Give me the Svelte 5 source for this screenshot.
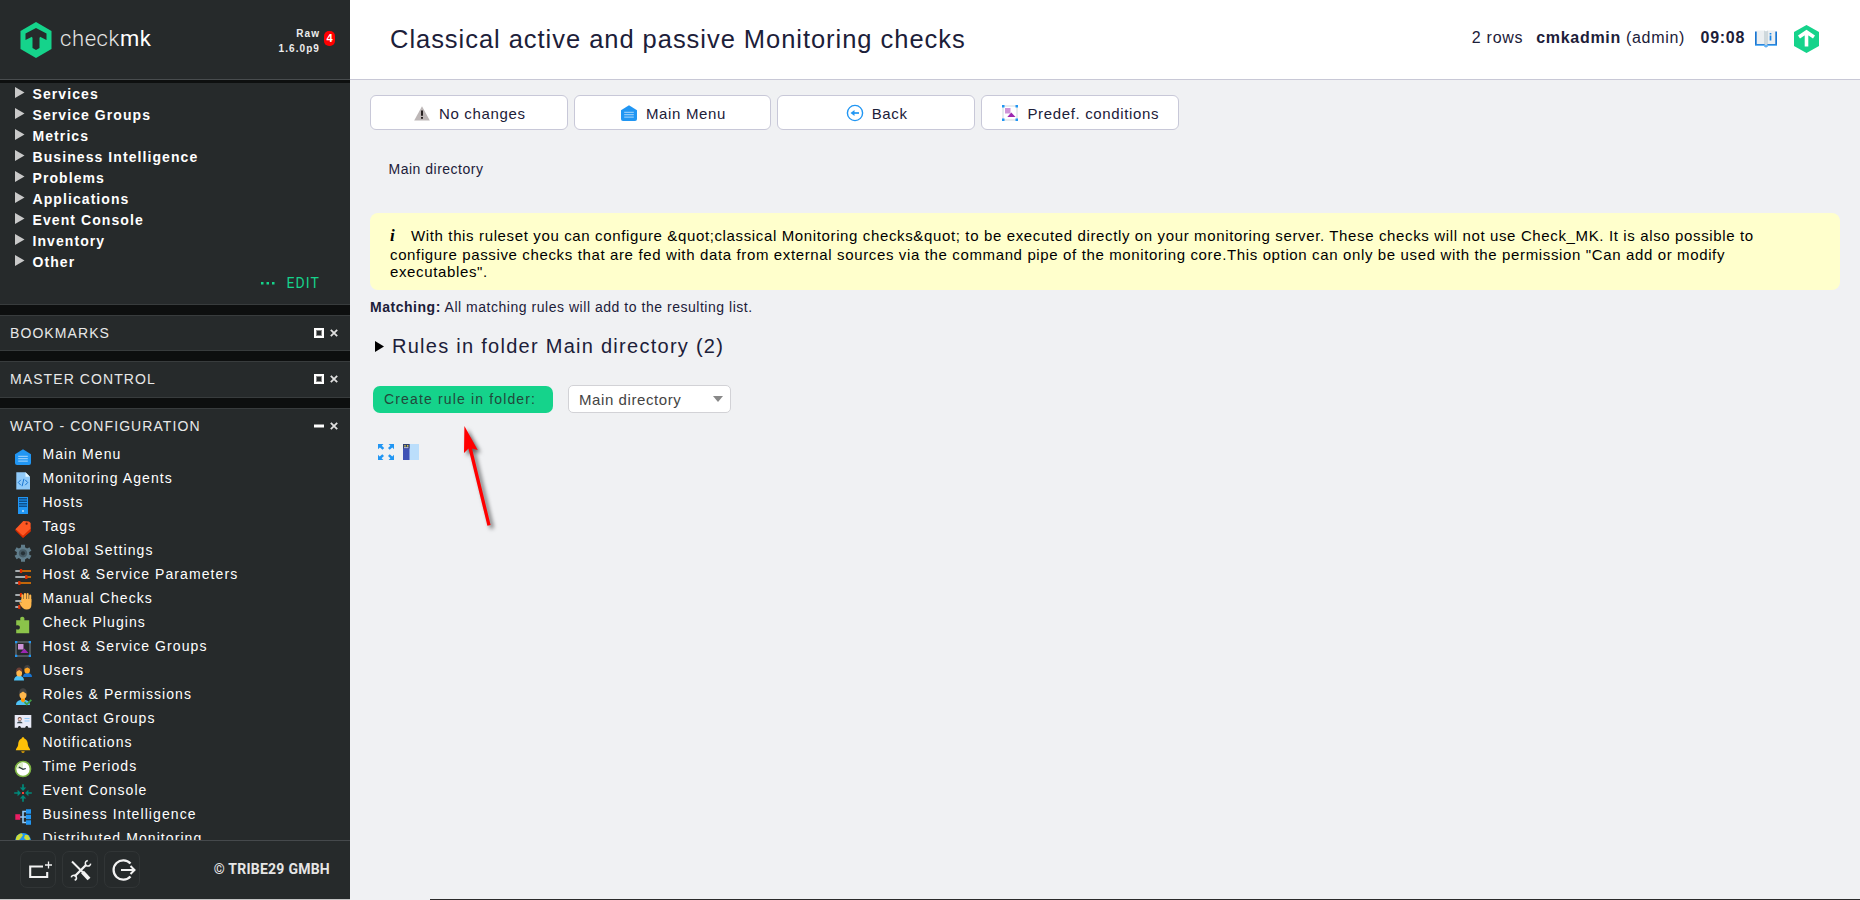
<script>
  const views = ['Services', 'Service Groups', 'Metrics', 'Business Intelligence', 'Problems', 'Applications', 'Event Console', 'Inventory', 'Other'];

  const art = {
    home: '<path d="M0 5.3 8 .2l8 5.1V14a2 2 0 0 1-2 2H2a2 2 0 0 1-2-2z" fill="#2196f3"/><path d="M3.2 7.3h9.6M3.2 9.7h9.6M3.2 12.1h9.6" stroke="#90caf9" stroke-width="1.2"/>',
    agent: '<path d="M1.3-.8h9.2L15 3.700V16.500H1.300z" fill="#90caf9"/><path d="M10.500-.8 15 3.700h-4.500z" fill="#e1f5fe"/><path d="M5.800 6.800 3.300 9.500l2.500 2.700M10.200 6.800l2.500 2.700-2.500 2.700M8.900 5.800 7.100 13.200" stroke="#1976d2" stroke-width="1" fill="none"/>',
    host: '<path d="M3 0h10v17H3z" fill="#2196f3"/><path d="M4 1h8v1.500H4zM4 3.500h8V5H4zM4 6h8v1.500H4zM4 8.500h8V10H4z" fill="#0d4f8b"/><circle cx="8" cy="14" r="1" fill="#bbdefb"/>',
    tag: '<path d="m.6 9 7.500 7.800 7.500-6.300V6L8 13.500z" fill="#bf360c"/><path d="M8.300 0 14 .4 15.600 2v5.700L8 15 .4 8.300z" fill="#ff5722"/><path d="M.4 8.300 8 15l7.600-7.300v2.600L8 17 .4 9.400z" fill="#dd2c00"/><circle cx="11.600" cy="2.700" r="1.100" fill="#702010"/>',
    gear: '<circle cx="8" cy="8.300" r="6.300" fill="#607d8b"/><path d="M8-.2v17M.6 4.050l14.800 8.500M.6 12.550l14.800-8.500" stroke="#607d8b" stroke-width="4"/><circle cx="8" cy="8.300" r="4.100" fill="#455a64"/><circle cx="8" cy="8.300" r="2.100" fill="#263238"/>',
    sliders: '<path d="M.3 2h6M.3 8h11M.3 14h4" stroke="#cfd8dc" stroke-width="1.700"/><path d="M6 2h10M12 8h4M4 14h12" stroke="#f57c00" stroke-width="1.700"/><path d="M6 .1v3.800M11.300 6.100v3.800M4.300 12.100v3.800" stroke="#dd2c00" stroke-width="2.300"/>',
    hand: '<path d="M.3 2h6M.3 8h8M.3 14h4" stroke="#cfd8dc" stroke-width="1.700"/><path d="M6 .1v3.800M4.300 12.100v3.800" stroke="#dd2c00" stroke-width="2.200"/><path d="M7.500 9V2.200M10 8V1M12.600 8V1M15.200 9V2.600" stroke="#ffb74d" stroke-width="2.100" stroke-linecap="round"/><path d="M6.400 6h10v6c0 3-2 4.500-4.700 4.500-3 0-4.500-2-6-4L4.200 9.600c.7-1 1.600-.7 2.200.3z" fill="#ffb74d"/>',
    puzzle: '<path d="M1.200 3.200h4.200C4.700.7 5.700-.3 7.300-.3S10 .9 9.300 3.200h4.900v13H1.200v-4c2.500.7 3.700-.2 3.700-1.800s-1.300-2.500-3.700-1.900z" fill="#8bc34a"/>',
    group: '<path d="M1 1h14v14H1z" fill="none" stroke="#78838b" stroke-width="1"/><path d="M3 3h5.500v5.500H3z" fill="#ce93d8"/><path d="m5.300 12 4-4.500 4.200 4.500z" fill="#9c27b0"/><path d="M0 0h2.300v2.300H0zM13.700 0H16v2.300h-2.300zM0 13.700h2.300V16H0zM13.700 13.700H16V16h-2.300z" fill="#2196f3"/>',
    predef: '<path d="M1 1h14v14H1z" fill="none" stroke="#cfd8dc" stroke-width="1"/><path d="M3 3h5.500v5.500H3z" fill="#ce93d8"/><path d="m5.300 12 4-4.500 4.200 4.500z" fill="#9c27b0"/><path d="M0 0h2.500v2.500H0zM13.500 0H16v2.500h-2.500zM0 13.500h2.500V16H0zM13.500 13.500H16V16h-2.500z" fill="#2196f3"/>',
    users: '<path d="M8 12c0-3 2-4 4.500-4s4.500 1 4.500 4z" fill="#1976d2"/><path d="M-1 15.500c0-3 2-4.700 5-4.700s5 1.700 5 4.700z" fill="#4fc3f7"/><ellipse cx="12.200" cy="5" rx="2.800" ry="3.600" fill="#ffa726"/><path d="M9.200 4c-.3-3 1.300-4 3-4s3.400 1 3 4L12.300 2.500z" fill="#424242"/><ellipse cx="4.200" cy="8" rx="2.900" ry="3.600" fill="#ffb74d"/><path d="M1 7c-.3-3 1.300-4.500 3.200-4.500S7.700 4 7.400 7L4.200 5z" fill="#6d4037"/>',
    roles: '<path d="M1 16c0-3.800 3-5.300 7-5.300S14.800 12.200 15 16z" fill="#4fc3f7"/><path d="M6 8h4v4l-2 1.500L6 12z" fill="#ff9800"/><ellipse cx="8" cy="5.800" rx="3.500" ry="4" fill="#ffb74d"/><path d="M4.300 5C4 1.500 5.300-.8 8-.8S12 1.500 11.700 5L8 2.500z" fill="#424242"/><path d="m9.500 13 2.300 2.300 4.500-4.500" fill="none" stroke="#43a047" stroke-width="1.800"/>',
    card: '<path d="M-.3 2h16.600v12.800h-3c-.3-2.500-2.800-2.500-3.100 0H6c-.3-2.500-2.800-2.500-3.100 0H-.3z" fill="#e8eaf6"/><circle cx="4.700" cy="6" r="2" fill="#6d4c41"/><circle cx="4.700" cy="6.300" r="1.200" fill="#ffccbc"/><path d="M2 10.300c0-2.500 5.500-2.500 5.500 0z" fill="#37474f"/><path d="M9.500 5.500h5M9.500 8h5" stroke="#90caf9" stroke-width="1"/>',
    bell: '<path d="M8 .3c1 0 1.300.7 1.300 1.300C12 2.500 12.700 5 12.900 8c.2 2.500 2.300 3.200 2.300 5.300H.8C.8 11.200 2.900 10.500 3.100 8c.2-3 .9-5.500 3.600-6.400C6.700 1 7 .3 8 .3z" fill="#ffc107"/><path d="M6.300 14.200h3.400c0 2.300-3.400 2.300-3.400 0z" fill="#e6a400"/>',
    clock: '<circle cx="8" cy="8" r="7.500" fill="#fff" stroke="#7cb342" stroke-width="1.700"/><path d="M8 8V1.500A6.500 6.500 0 0 0 1.500 8z" fill="#dcedc8"/><path d="m3.800 6 4.200 2.400 2.800-.9" fill="none" stroke="#263238" stroke-width="1.300"/>',
    event: '<path d="M8-.8v5M8 16.800v-5M-.8 8h5M16.800 8h-5" stroke="#00897b" stroke-width="1.700"/><path d="M4.800 2.600h6.400L8 6zM4.800 13.400h6.400L8 10zM2.600 4.800v6.400L6 8zM13.400 4.800v6.400L10 8z" fill="#00897b"/><path d="M7 7h2v2H7z" fill="#f44336"/>',
    tree: '<path d="M5 8h3M12 2.500H8v11h4M8 8h4" fill="none" stroke="#90caf9" stroke-width="1.600"/><path d="M.3 5.200h4.900v5.600H.3z" fill="#e91e63"/><path d="M11 .2h5v4.600h-5zM11 5.700h5v4.600h-5zM11 11.200h5v4.600h-5z" fill="#2196f3"/>',
    globe: '<circle cx="8" cy="8" r="8" fill="#2196f3"/><path d="M1 5c1-3 3-4.500 5.500-4.800L8 2 6 5l-2 2-3 1zM10 2l3 0 2.300 4L12 8 9 5z" fill="#cddc39"/>',
    warn: '<path d="M8 1.200 15.800 15.400H.2z" fill="#bdb7b7"/><path d="M8 5.500v5.300M8 12v1.800" stroke="#272222" stroke-width="2"/>',
    back: '<circle cx="8" cy="8" r="7.600" fill="none" stroke="#2196f3" stroke-width="1.400"/><path d="M7 8h5" stroke="#2196f3" stroke-width="1.700"/><path d="m3.500 8 4-3v6z" fill="#2196f3"/>',
    expand: '<path d="M0 0h5.500L3.800 1.700 6.200 4.100 4.500 5.800 1.900 3.400 0 5.300zM16 0v5.300l-1.700-1.900-2.600 2.400L10 4.100l2.400-2.400L10.600 0zM0 16v-5.300l1.700 1.900 2.600-2.400L6 11.900l-2.400 2.400L5.400 16zM16 16h-5.400l1.800-1.700-2.400-2.400 1.700-1.700 2.600 2.400 1.700-1.900z" fill="#2196f3"/>',
    panel: '<path d="M0 0h16v16H0z" fill="#bbdefb"/><path d="M0 0h6.500v16H0z" fill="#3f51b5"/><path d="M0 0h6.500v4.500H0z" fill="#303f70"/><path d="M1.300 1.800h1.400M4 1.800h1.400" stroke="#ffeb3b" stroke-width="1.200"/><path d="M1 3.700h4.500" stroke="#c5cae9" stroke-width="1"/>'
  };
  const icon = (name) => `<svg width="16" height="16" viewBox="0 0 16 16" style="display:block;overflow:visible">${art[name]}</svg>`;

  const wato = [
    ['home', 'Main Menu'], ['agent', 'Monitoring Agents'], ['host', 'Hosts'], ['tag', 'Tags'],
    ['gear', 'Global Settings'], ['sliders', 'Host & Service Parameters'], ['hand', 'Manual Checks'],
    ['puzzle', 'Check Plugins'], ['group', 'Host & Service Groups'], ['users', 'Users'],
    ['roles', 'Roles & Permissions'], ['card', 'Contact Groups'], ['bell', 'Notifications'],
    ['clock', 'Time Periods'], ['event', 'Event Console'], ['tree', 'Business Intelligence'],
    ['globe', 'Distributed Monitoring']
  ];
  const buttons = [['warn', 'No changes'], ['home', 'Main Menu'], ['back', 'Back'], ['predef', 'Predef. conditions']];

  const help = [
    'With this ruleset you can configure &quot;classical Monitoring checks&quot; to be executed directly on your monitoring server. These checks will not use Check_MK. It is also possible to',
    'configure passive checks that are fed with data from external sources via the command pipe of the monitoring core.This option can only be used with the permission "Can add or modify',
    'executables".'
  ];
</script>

{#snippet snapHead(title, open)}
  <div class="snap-head">
    <span class="snap-title">{title}</span>
    <svg width="10" height="10" viewBox="0 0 10 10">
      {#if open}
        <path d="M0 5h10" stroke="#fff" stroke-width="3" />
      {:else}
        <path d="M0 0h10v10H0z" fill="#fff" /><path d="M2 2h6v6H2z" fill="#888" /><path d="M3 3h4v4H3z" fill="#262a2b" />
      {/if}
    </svg>
    <svg class="close" width="8" height="8" viewBox="0 0 8 8"><path d="m.8.8 6.400 6.400M7.200.8.8 7.200" stroke="#e0e0e0" stroke-width="1.800" /></svg>
  </div>
{/snippet}

<div class="page">
  <aside>
    <div class="brand">
      <svg width="32" height="36" viewBox="0 0 32 36">
        <path d="M16 0 31.500 9v18L16 36 .5 27V9z" fill="#15d38b" />
        <path d="M5.500 18v-6.500L16 6l10.500 5.500V18l-7-3.400V26L16 28l-3.500-2V14.600z" fill="#262a2b" />
        <path d="M16 11.500 12.500 13.500v2M16 11.500l3.500 2v2" stroke="#262a2b" fill="none" />
      </svg>
      <span class="word">check<b>mk</b></span>
      <span class="version">Raw<br />1.6.0p9</span>
      <span class="badge">4</span>
    </div>
    <div class="snapins">
      <section class="views">
        {#each views as v}
          <div class="view"><svg width="10" height="11" viewBox="0 0 10 11"><path d="M0 0v11l9.500-5.500z" fill="#c9c9c9" /></svg>{v}</div>
        {/each}
        <div class="edit"><svg width="14" height="3" viewBox="0 0 14 3"><path d="M0 0h2.500v2.500H0zM5.500 0H8v2.500H5.500zM11 0h2.500v2.500H11z" fill="#15d38b" /></svg>EDIT</div>
      </section>
      <section class="closed">{@render snapHead('BOOKMARKS', false)}</section>
      <section class="closed tall">{@render snapHead('MASTER CONTROL', false)}</section>
      <section class="wato">
        {@render snapHead('WATO - CONFIGURATION', true)}
        {#each wato as [name, label]}
          <div class="item"><span class="ico">{@html icon(name)}</span>{label}</div>
        {/each}
      </section>
    </div>
    <footer>
      <span class="tool"><svg width="26" height="24" viewBox="0 0 26 24"><path d="M17 8.500H4.200V19h17v-5" fill="none" stroke="#f2f2f2" stroke-width="2.100" /><path d="M22.500 3.500v7M19 7h7" stroke="#f2f2f2" stroke-width="1.300" /></svg></span>
      <span class="tool"><svg width="26" height="24" viewBox="0 0 26 24"><path d="M4 3.500 15.500 15" stroke="#f2f2f2" stroke-width="2" /><path d="m14.500 14 6.500 7" stroke="#f2f2f2" stroke-width="4" /><path d="M18 7 6.500 18.500" stroke="#f2f2f2" stroke-width="2.300" /><path d="M19.800 2.500c-2 .6-2.900 2-2.300 4L19 8c2 .4 3.300-.4 3.700-2.400M6.700 22.300c1.700-.8 2.200-2 1.500-3.600L6.800 17.300c-2-.2-3.200.5-3.500 2" fill="none" stroke="#f2f2f2" stroke-width="1.500" /></svg></span>
      <span class="tool"><svg width="26" height="24" viewBox="0 0 26 24"><path d="M20.500 5.500a9.700 9.700 0 1 0 0 13" fill="none" stroke="#f2f2f2" stroke-width="2.300" /><path d="M11 12h13M20.500 8l4 4-4 4" fill="none" stroke="#f2f2f2" stroke-width="2" /></svg></span>
      <span class="copy">© TRIBE29 GMBH</span>
    </footer>
  </aside>

  <main>
    <header>
      <h1>Classical active and passive Monitoring checks</h1>
      <div class="status">
        <span class="rows">2 rows</span>
        <b class="user">cmkadmin</b>
        <span class="role">(admin)</span>
        <b class="time">09:08</b>
        <svg class="book" width="22" height="18" viewBox="0 0 22 18">
          <path d="M0 1.500h22v14.500h-9l-2 1.500-2-1.500H0z" fill="#1976d2" />
          <path d="M0 14.800h22V16h-9l-2 1.500L9 16H0z" fill="#64b5f6" />
          <path d="M1.700.5h7.800L11 1.300l1.500-.8h7.800V14h-7.800L11 15l-1.500-1H1.700z" fill="#eceff1" />
          <path d="M9 .5 11 1.500V15L9 14zM13 .5l-2 1v13.500l2-1z" fill="#cfd8dc" />
          <path d="M15.500 3v1.500M15.500 5.500V10.500" stroke="#1e88e5" stroke-width="1.700" />
        </svg>
        <svg width="25" height="28" viewBox="0 0 25 28">
          <path d="M12.500 0 25 7v14l-12.500 7L0 21V7z" fill="#15d38b" />
          <path d="m5 12 7.500-5L20 12M12.500 7.500V21.500" fill="none" stroke="#fff" stroke-width="3.600" />
        </svg>
      </div>
    </header>

    <div class="content">
      <nav>
        {#each buttons as [name, label]}
          <div class="btn"><span>{@html icon(name)}</span>{label}</div>
        {/each}
      </nav>
      <div class="crumb">Main directory</div>
      <div class="help">
        <div class="line first"><i>i</i><span>{help[0]}</span></div>
        <div class="line">{help[1]}</div>
        <div class="line">{help[2]}</div>
      </div>
      <div class="matching"><b>Matching:</b> All matching rules will add to the resulting list.</div>
      <h3><svg width="9" height="11" viewBox="0 0 9 11"><path d="M0 0v11l9-5.500z" fill="#000" /></svg>Rules in folder Main directory (2)</h3>
      <div class="create">
        <span class="green">Create rule in folder:</span>
        <span class="select">Main directory<svg width="10" height="6" viewBox="0 0 10 6"><path d="M0 0h10L5 6z" fill="#888" /></svg></span>
      </div>
      <div class="foot-icons"><span>{@html icon('expand')}</span><span>{@html icon('panel')}</span></div>
    </div>
    <svg class="arrow" width="60" height="120" viewBox="0 0 60 120">
      <path d="M14.400 6 27.700 30 22 28.500 40.600 105l-3.200.8L18.500 28.500 14 33z" fill="#f00" />
    </svg>
    <div class="edge"></div>
  </main>
</div>

<style>
  :global(body) { background: #f0f1f3; overflow: hidden; }
  .page { display: flex; width: 1860px; height: 900px; overflow: hidden; font-family: "Liberation Sans", Arial, sans-serif; font-size: 14px; color: #1c2039; }
  aside { box-sizing: border-box; width: 350px; height: 900px; display: flex; flex-direction: column; background: #0d0f0f; color: #fff; border-bottom: 1px solid #c4c4c4; letter-spacing: 1.080px; }
  .brand { box-sizing: border-box; height: 80px; flex: none; display: flex; align-items: flex-start; background: #262a2b; border-bottom: 1px solid #484c4e; padding: 22px 0 0 20px; }
  .word { font: 300 22px/26px Roboto, sans-serif; letter-spacing: .6px; margin: 4px 0 0 8px; width: 100px; color: #e6e6e6; }
  .word b { font-weight: 400; color: #fff; }
  .version { margin: 0 0 0 auto; padding-top: 4px; font-weight: bold; font-size: 10px; line-height: 15px; text-align: right; color: #ededed; }
  .badge { margin: 9px 15px 0 4px; width: 11px; height: 15px; border-radius: 5px; background: #f00; font-weight: bold; font-size: 11px; line-height: 15px; text-align: center; letter-spacing: 0; }
  .snapins { flex: 1; overflow: hidden; padding-top: 3px; }
  section { background: #262a2b; border-bottom: 1px solid #383c3d; border-top: 1px solid #383c3d; margin-bottom: 10px; }
  .views { box-sizing: border-box; height: 222px; border-top: 0; padding-top: 1px; }
  .view { display: flex; align-items: flex-start; height: 21px; line-height: 20px; font-weight: bold; padding-left: 14.500px; }
  .view svg { margin: 3px 8px 0 0; }
  .edit { display: flex; align-items: center; justify-content: flex-end; font-family: Roboto, sans-serif; color: #15d38b; padding-right: 30px; line-height: 21px; }
  .edit svg { margin: 0 12px 1px 0; }
  .closed { height: 34px; }
  .tall { height: 35px; }
  .snap-head { display: flex; align-items: center; height: 34px; padding: 0 12px 0 10px; }
  .snap-title { flex: 1; color: #e8e8e8; }
  .close { margin-left: 6px; }
  .wato .snap-head { height: 33px; }
  .item { display: flex; align-items: flex-start; height: 24px; line-height: 24px; padding-left: 15px; }
  .ico { width: 27.400px; padding-top: 7px; height: 16px; }
  footer { flex: none; box-sizing: border-box; height: 59px; border-top: 1px solid #45494c; background: #262a2b; display: flex; align-items: flex-start; gap: 6px; padding: 10px 20px 0; }
  .tool { box-sizing: border-box; width: 36px; height: 37px; border: 1px solid #313536; border-radius: 7px; display: flex; align-items: center; justify-content: center; padding-left: 2px; }
  .copy { margin: 9px 0 0 auto; font: bold 14px/19px Roboto, sans-serif; letter-spacing: .25px; color: #e6e6e6; }

  main { position: relative; width: 1510px; height: 900px; background: #f0f1f3; }
  header { box-sizing: border-box; height: 80px; background: #fff; border-bottom: 1px solid #c8c8d6; display: flex; justify-content: space-between; padding: 0 41px 0 40px; }
  h1 { margin: 23px 0 0; font-size: 25.500px; line-height: 32px; font-weight: normal; letter-spacing: .96px; }
  .status { display: flex; align-items: flex-start; font-size: 16px; line-height: 18px; letter-spacing: .7px; padding-top: 25px; }
  .status > :not(svg) { margin-top: 4px; }
  .user { margin-left: 13px; }
  .role { margin-left: 5px; }
  .time { margin-left: 15.500px; }
  .book { margin: 5px 17px 0 10px; }
  .content { padding: 15px 20px 0; }
  nav { display: flex; gap: 6px; }
  .btn { box-sizing: border-box; width: 197.670px; height: 35px; border: 1px solid #c8c8d8; border-radius: 6px; background: #fff; display: flex; align-items: center; justify-content: center; gap: 9px; font-size: 15px; letter-spacing: .65px; padding: 2px 0 0 2px; }
  .btn span { margin-top: -2px; }
  .crumb { margin: 30px 0 0 18.500px; line-height: 18px; letter-spacing: .5px; }
  .help { box-sizing: border-box; height: 77px; margin-top: 35px; border-radius: 8px; background: #ffc; color: #000; padding: 14px 20px 0; font-size: 15px; line-height: 17px; letter-spacing: .635px; white-space: nowrap; }
  .first { height: 19px; display: flex; }
  .first i { width: 21px; font: italic bold 17px/17px "Liberation Serif", serif; }
  .matching { margin-top: 9px; line-height: 16px; letter-spacing: .53px; }
  h3 { display: flex; align-items: center; gap: 8px; margin: 16px 0 0 5px; font-size: 20px; line-height: 30px; font-weight: normal; letter-spacing: 1.270px; }
  .create { display: flex; gap: 15px; align-items: center; margin: 24px 0 0 3px; }
  .green { box-sizing: border-box; width: 180px; height: 27px; border-radius: 7px; background: #15d38b; color: #22483b; line-height: 27px; padding-left: 11px; letter-spacing: 1.150px; }
  .select { box-sizing: border-box; width: 163px; height: 28px; border: 1px solid #d2d2d6; border-radius: 5px; background: #fff; color: #444; font-size: 15px; letter-spacing: .58px; display: flex; align-items: center; justify-content: space-between; padding: 0 7px 0 10px; }
  .foot-icons { display: flex; gap: 9px; margin: 31px 0 0 8px; }
  .arrow { position: absolute; left: 100px; top: 420px; filter: drop-shadow(3px 3px 2px rgba(0, 0, 0, .6)); }
  .edge { position: absolute; left: 80px; right: 0; bottom: 0; height: 1px; background: #2a2a2a; }
</style>
